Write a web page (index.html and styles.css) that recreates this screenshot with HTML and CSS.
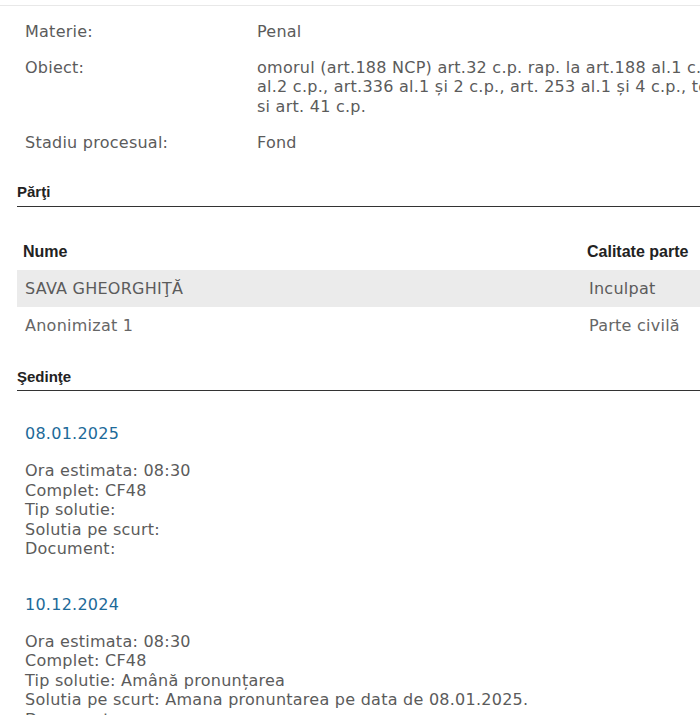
FILE: index.html
```html
<!DOCTYPE html>
<html lang="ro">
<head>
<meta charset="utf-8">
<title>Dosar</title>
<link rel="stylesheet" href="styles.css">
</head>
<body>
<div class="page">
  <div class="inner">
    <dl class="details">
      <div class="row"><dt>Materie:</dt><dd>Penal</dd></div>
      <div class="row"><dt>Obiect:</dt><dd><span class="ln">omorul (art.188 NCP) art.32 c.p. rap. la art.188 al.1 c.p., art. 194 al.1 lit. e</span><span class="ln">al.2 c.p., art.336 al.1 și 2 c.p., art. 253 al.1 și 4 c.p., toate cu aplicarea art. 38</span><span class="ln">si art. 41 c.p.</span></dd></div>
      <div class="row"><dt>Stadiu procesual:</dt><dd>Fond</dd></div>
    </dl>

    <h3 class="section-title">Părţi</h3>
    <table class="parti">
      <colgroup><col class="c1"><col class="c2"></colgroup>
      <thead>
        <tr><th>Nume</th><th>Calitate parte</th></tr>
      </thead>
      <tbody>
        <tr class="alt"><td>SAVA GHEORGHIŢĂ</td><td>Inculpat</td></tr>
        <tr><td>Anonimizat 1</td><td>Parte civilă</td></tr>
      </tbody>
    </table>

    <h3 class="section-title sedinte-title">Şedinţe</h3>
    <div class="sedinte">
      <div class="sedinta">
        <div class="date">08.01.2025</div>
        <div class="info">
          <div>Ora estimata: 08:30</div>
          <div>Complet: CF48</div>
          <div>Tip solutie: </div>
          <div>Solutia pe scurt: </div>
          <div>Document: </div>
        </div>
      </div>
      <div class="sedinta">
        <div class="date">10.12.2024</div>
        <div class="info">
          <div>Ora estimata: 08:30</div>
          <div>Complet: CF48</div>
          <div>Tip solutie: Amână pronunțarea</div>
          <div>Solutia pe scurt: Amana pronuntarea pe data de 08.01.2025.</div>
          <div>Document: </div>
        </div>
      </div>
    </div>
  </div>
</div>
</body>
</html>
```

FILE: styles.css
```css
html, body {
  margin: 0;
  padding: 0;
  overflow: hidden;
  background: #ffffff;
}
body {
  font-family: "DejaVu Sans", Verdana, sans-serif;
  font-size: 16px;
  letter-spacing: 0.25px;
  color: #5b5b5b;
}
.page {
  width: 980px;
  margin-top: 5px;
  border-top: 1px solid #e8e8e8;
}
.inner {
  padding: 7px 0 0 17px;
}
.details {
  margin: 0;
  padding: 0 0 0 8px;
}
.row {
  display: grid;
  grid-template-columns: 232px 1fr;
  padding: 8.5px 0;
  line-height: 19.45px;
}
.row dt, .row dd {
  margin: 0;
}
.ln {
  display: block;
  white-space: nowrap;
}
.section-title {
  font-family: "Liberation Sans", Arial, sans-serif;
  font-size: 15px;
  font-weight: bold;
  letter-spacing: 0;
  line-height: 17px;
  color: #222222;
  margin: 22px 0 0 0;
  padding: 0 0 6px 0;
  border-bottom: 1px solid #333333;
}
.sedinte-title {
  margin-top: 24px;
  padding-bottom: 5px;
}
.parti {
  width: 963px;
  margin-top: 26px;
  border-collapse: collapse;
  table-layout: fixed;
}
.c1 { width: 564px; }
.parti th {
  font-family: "Liberation Sans", Arial, sans-serif;
  font-size: 16px;
  font-weight: bold;
  letter-spacing: 0;
  color: #222222;
  text-align: left;
  line-height: 19px;
  padding: 9px 6px;
}
.parti td {
  line-height: 19px;
  padding: 9px 7px 9px 8px;
  color: #5b5b5b;
  white-space: nowrap;
}
.parti tr.alt td {
  background: #ebebeb;
}
.parti tbody tr:not(.alt) td {
  color: #666666;
}
.sedinte {
  padding: 33px 0 0 8px;
  line-height: 19.45px;
}
.sedinta {
  margin-bottom: 36.6px;
}
.date {
  color: #1d6a99;
  margin-bottom: 17.5px;
}
.info div {
  white-space: nowrap;
}
```
